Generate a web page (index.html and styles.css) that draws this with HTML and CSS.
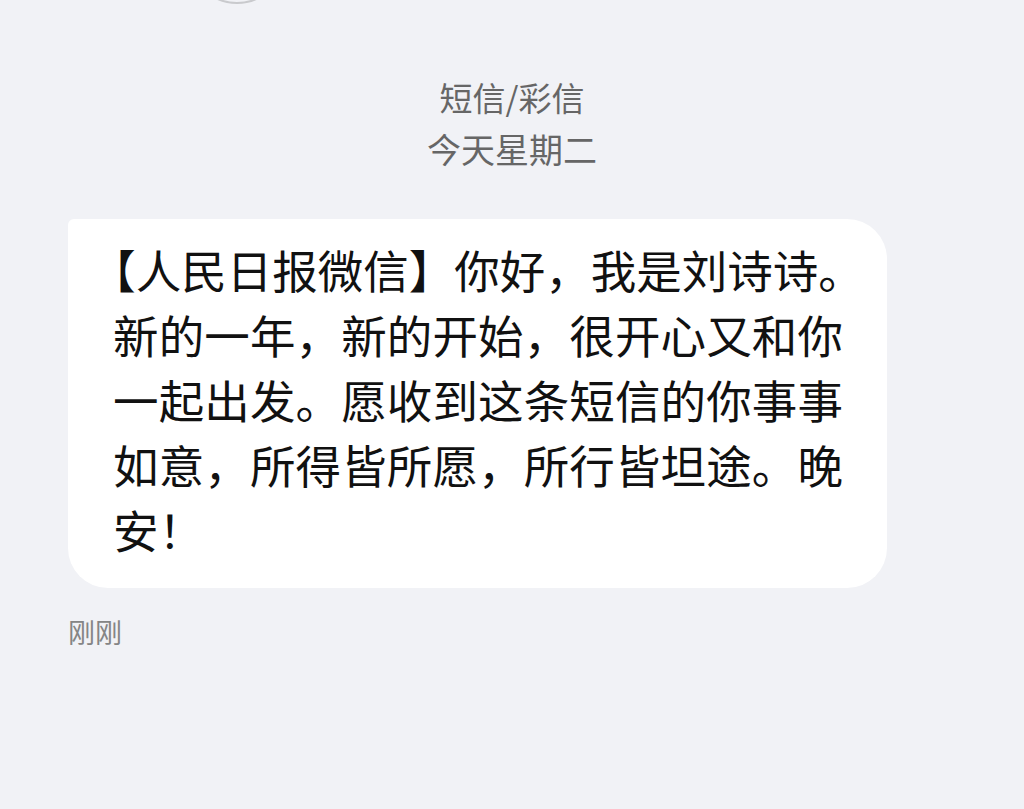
FILE: index.html
```html
<!DOCTYPE html>
<html lang="zh-CN">
<head>
    <meta charset="UTF-8">
    <meta name="viewport" content="width=device-width, initial-scale=1.0">
    <title>短信/彩信</title>
    <link rel="stylesheet" href="styles.css">
</head>
<body>
    <div class="top-circle"></div>
    <div class="header">
        <div class="title">短信/彩信</div>
        <div class="date">今天星期二</div>
    </div>
    <div class="bubble">
        <div class="line"><span class="halt">【</span>人民日报微信】你好，我是刘诗诗。</div>
        <div class="line">新的一年，新的开始，很开心又和你</div>
        <div class="line">一起出发。愿收到这条短信的你事事</div>
        <div class="line">如意，所得皆所愿，所行皆坦途。晚</div>
        <div class="line last">安！</div>
    </div>
    <div class="time">刚刚</div>
</body>
</html>
```
FILE: styles.css
```css
body {
    margin: 0;
    height: 809px;
    overflow: hidden;
    background-color: #f1f2f6;
    font-family: "Noto Sans CJK SC", "Noto Sans", sans-serif;
    position: relative;
}
.top-circle {
    position: absolute;
    left: 189px;
    top: -92px;
    width: 92px;
    height: 92px;
    border: 2px solid #c9cacd;
    border-radius: 50%;
}
.header {
    padding-top: 72px;
    text-align: center;
    color: #666666;
}
.title {
    font-size: 33px;
    line-height: 51px;
}
.date {
    font-size: 34px;
    line-height: 51px;
}
.bubble {
    margin: 45px 0 0 68px;
    width: 730px;
    padding: 18px 44px 26px 45px;
    background: white;
    border-radius: 6px 40px 40px 40px;
    color: #111111;
    font-size: 45.5px;
    line-height: 65px;
}
.line {
    white-space: nowrap;
    text-align: justify;
    text-align-last: justify;
    text-justify: inter-character;
}
.line.last {
    text-align-last: left;
}
.halt {
    font-feature-settings: "halt";
}
.time {
    margin: 26px 0 0 68px;
    font-size: 27px;
    line-height: 36px;
    color: #858585;
}
```
